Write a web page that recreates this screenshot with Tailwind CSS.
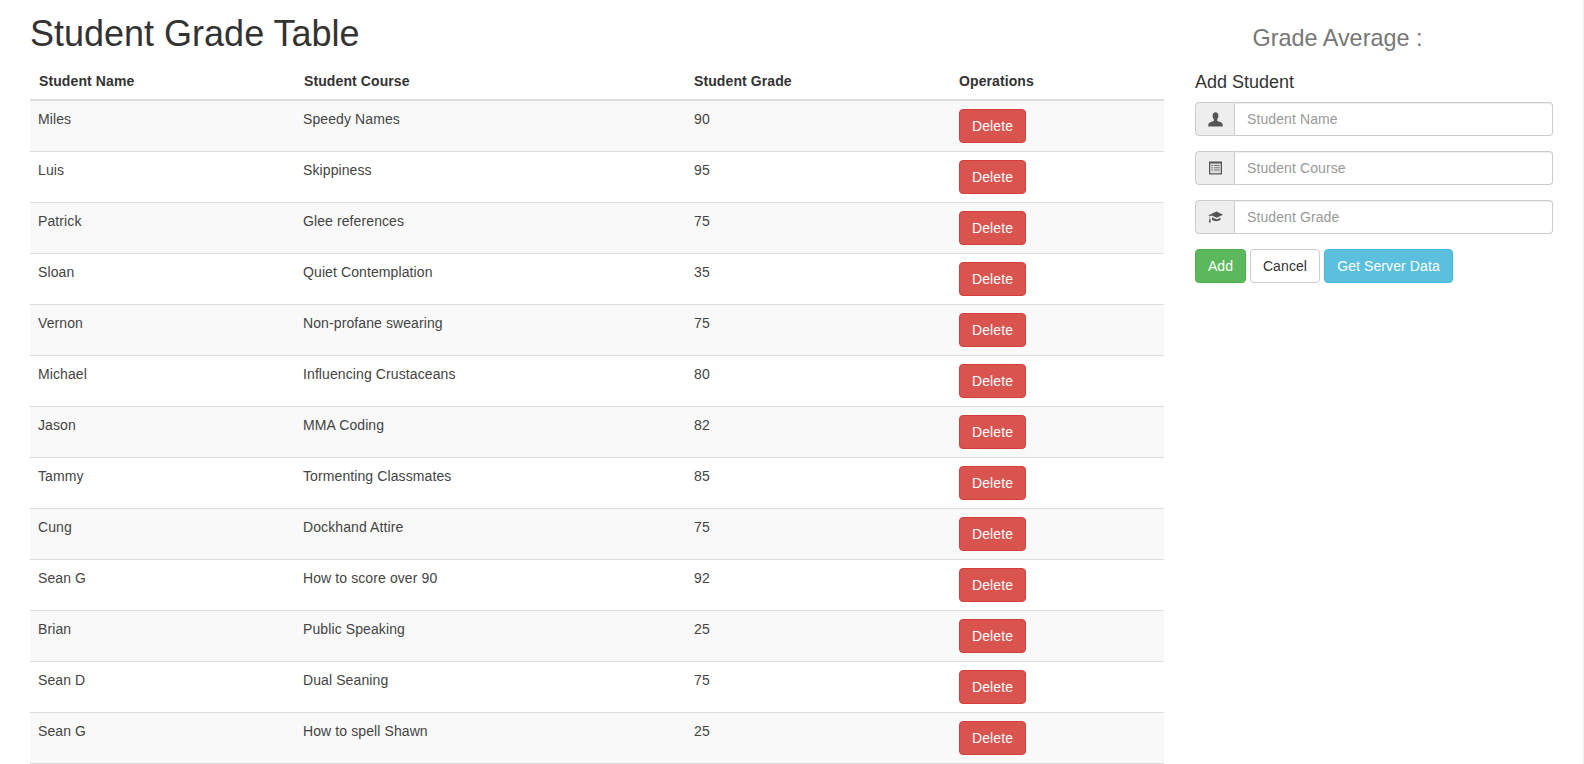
<!DOCTYPE html>
<html lang="en">

<head>
    <meta charset="UTF-8">
    <meta name="viewport" content="width=device-width, initial-scale=1.0">
    <title>Student Grade Table</title>
    <script src="https://cdn.jsdelivr.net/npm/@tailwindcss/browser@4"></script>
</head>

<body class="bg-white text-[#333] text-sm leading-5 tracking-[0.1px] font-['Liberation_Sans',Arial,sans-serif] overflow-hidden">
    <div class="flex items-start pl-[30px] h-[764px] border-r border-[#eee]">
        <!-- table side -->
        <div class="w-[1134px] shrink-0">
            <h1 class="text-[36px] leading-[39.6px] tracking-normal mt-[14px] mb-[9px]">Student Grade Table</h1>
            <table class="w-full table-fixed border-collapse">
                <thead>
                    <tr class="border-b-2 border-[#ddd] text-left">
                        <th class="w-[265px] p-2 pl-[9px] font-bold">Student Name</th>
                        <th class="w-[390px] p-2 pl-[9px] font-bold">Student Course</th>
                        <th class="w-[266px] p-2 pl-[9px] font-bold">Student Grade</th>
                        <th class="p-2 font-bold">Operations</th>
                    </tr>
                </thead>
                <tbody class="text-[#444]">
                    <tr class="border-b border-[#ddd] bg-[#f9f9f9]">
                        <td class="p-2 align-top">Miles</td><td class="p-2 align-top">Speedy Names</td><td class="p-2 pl-[9px] align-top">90</td>
                        <td class="p-2 align-top"><button class="h-[34px] w-[67px] bg-[#d9534f] border border-[#d43f3a] rounded text-white">Delete</button></td>
                    </tr>
                    <tr class="border-b border-[#ddd]">
                        <td class="p-2 align-top">Luis</td><td class="p-2 align-top">Skippiness</td><td class="p-2 pl-[9px] align-top">95</td>
                        <td class="p-2 align-top"><button class="h-[34px] w-[67px] bg-[#d9534f] border border-[#d43f3a] rounded text-white">Delete</button></td>
                    </tr>
                    <tr class="border-b border-[#ddd] bg-[#f9f9f9]">
                        <td class="p-2 align-top">Patrick</td><td class="p-2 align-top">Glee references</td><td class="p-2 pl-[9px] align-top">75</td>
                        <td class="p-2 align-top"><button class="h-[34px] w-[67px] bg-[#d9534f] border border-[#d43f3a] rounded text-white">Delete</button></td>
                    </tr>
                    <tr class="border-b border-[#ddd]">
                        <td class="p-2 align-top">Sloan</td><td class="p-2 align-top">Quiet Contemplation</td><td class="p-2 pl-[9px] align-top">35</td>
                        <td class="p-2 align-top"><button class="h-[34px] w-[67px] bg-[#d9534f] border border-[#d43f3a] rounded text-white">Delete</button></td>
                    </tr>
                    <tr class="border-b border-[#ddd] bg-[#f9f9f9]">
                        <td class="p-2 align-top">Vernon</td><td class="p-2 align-top">Non-profane swearing</td><td class="p-2 pl-[9px] align-top">75</td>
                        <td class="p-2 align-top"><button class="h-[34px] w-[67px] bg-[#d9534f] border border-[#d43f3a] rounded text-white">Delete</button></td>
                    </tr>
                    <tr class="border-b border-[#ddd]">
                        <td class="p-2 align-top">Michael</td><td class="p-2 align-top">Influencing Crustaceans</td><td class="p-2 pl-[9px] align-top">80</td>
                        <td class="p-2 align-top"><button class="h-[34px] w-[67px] bg-[#d9534f] border border-[#d43f3a] rounded text-white">Delete</button></td>
                    </tr>
                    <tr class="border-b border-[#ddd] bg-[#f9f9f9]">
                        <td class="p-2 align-top">Jason</td><td class="p-2 align-top">MMA Coding</td><td class="p-2 pl-[9px] align-top">82</td>
                        <td class="p-2 align-top"><button class="h-[34px] w-[67px] bg-[#d9534f] border border-[#d43f3a] rounded text-white">Delete</button></td>
                    </tr>
                    <tr class="border-b border-[#ddd]">
                        <td class="p-2 align-top">Tammy</td><td class="p-2 align-top">Tormenting Classmates</td><td class="p-2 pl-[9px] align-top">85</td>
                        <td class="p-2 align-top"><button class="h-[34px] w-[67px] bg-[#d9534f] border border-[#d43f3a] rounded text-white">Delete</button></td>
                    </tr>
                    <tr class="border-b border-[#ddd] bg-[#f9f9f9]">
                        <td class="p-2 align-top">Cung</td><td class="p-2 align-top">Dockhand Attire</td><td class="p-2 pl-[9px] align-top">75</td>
                        <td class="p-2 align-top"><button class="h-[34px] w-[67px] bg-[#d9534f] border border-[#d43f3a] rounded text-white">Delete</button></td>
                    </tr>
                    <tr class="border-b border-[#ddd]">
                        <td class="p-2 align-top">Sean G</td><td class="p-2 align-top">How to score over 90</td><td class="p-2 pl-[9px] align-top">92</td>
                        <td class="p-2 align-top"><button class="h-[34px] w-[67px] bg-[#d9534f] border border-[#d43f3a] rounded text-white">Delete</button></td>
                    </tr>
                    <tr class="border-b border-[#ddd] bg-[#f9f9f9]">
                        <td class="p-2 align-top">Brian</td><td class="p-2 align-top">Public Speaking</td><td class="p-2 pl-[9px] align-top">25</td>
                        <td class="p-2 align-top"><button class="h-[34px] w-[67px] bg-[#d9534f] border border-[#d43f3a] rounded text-white">Delete</button></td>
                    </tr>
                    <tr class="border-b border-[#ddd]">
                        <td class="p-2 align-top">Sean D</td><td class="p-2 align-top">Dual Seaning</td><td class="p-2 pl-[9px] align-top">75</td>
                        <td class="p-2 align-top"><button class="h-[34px] w-[67px] bg-[#d9534f] border border-[#d43f3a] rounded text-white">Delete</button></td>
                    </tr>
                    <tr class="border-b border-[#ddd] bg-[#f9f9f9]">
                        <td class="p-2 align-top">Sean G</td><td class="p-2 align-top">How to spell Shawn</td><td class="p-2 pl-[9px] align-top">25</td>
                        <td class="p-2 align-top"><button class="h-[34px] w-[67px] bg-[#d9534f] border border-[#d43f3a] rounded text-white">Delete</button></td>
                    </tr>
                </tbody>
            </table>
        </div>

        <!-- add student form -->
        <div class="w-[358px] ml-[31px] shrink-0">
            <h3 class="text-[23.4px] leading-[26.4px] tracking-normal text-[#777] text-center mt-[25px] pr-[73px]">Grade Average :</h3>
            <h4 class="text-lg leading-5 tracking-normal mt-[21px] mb-[10px]">Add Student</h4>

            <div class="flex h-[34px] mb-[15px]">
                <span class="w-[40px] shrink-0 flex items-center justify-center bg-[#eee] border border-[#ccc] rounded-l">
                    <svg class="w-[15px] h-[15px] text-[#555]" viewBox="0 0 14 14" fill="currentColor"><path d="M7 .3c-1.700 0-2.700 1.400-2.700 3.300 0 1.300.4 2.500 1.100 3.200v1.500C3.600 9 1.200 9.500.6 10.800c-.3.600-.4 1.600-.4 2.700h13.600c0-1.100-.1-2.100-.4-2.700-.6-1.300-3-1.800-4.800-2.500V6.800c.7-.7 1.100-1.900 1.100-3.200C9.700 1.700 8.700.3 7 .3z"/></svg>
                </span>
                <input type="text" placeholder="Student Name" class="flex-1 min-w-0 px-3 border border-l-0 border-[#ccc] rounded-r shadow-[inset_0_1px_1px_rgba(0,0,0,0.075)] placeholder:text-[#999]">
            </div>

            <div class="flex h-[34px] mb-[15px]">
                <span class="w-[40px] shrink-0 flex items-center justify-center bg-[#eee] border border-[#ccc] rounded-l">
                    <svg class="w-[13px] h-[14px] text-[#555]" viewBox="0 0 13 14"><rect x="0" y="0.500" width="13" height="13" fill="currentColor"/><rect x="1.200" y="2.500" width="10.600" height="9.800" fill="#ddd"/><path d="M2.300 4h1.700v1H2.300zM5 4h5.700v1H5zM2.300 6.200h1.700v1H2.300zM5 6.200h5.700v1H5zM2.300 8.400h1.700v1H2.300zM5 8.400h5.700v1H5z" fill="#777"/></svg>
                </span>
                <input type="text" placeholder="Student Course" class="flex-1 min-w-0 px-3 border border-l-0 border-[#ccc] rounded-r shadow-[inset_0_1px_1px_rgba(0,0,0,0.075)] placeholder:text-[#999]">
            </div>

            <div class="flex h-[34px] mb-[15px]">
                <span class="w-[40px] shrink-0 flex items-center justify-center bg-[#eee] border border-[#ccc] rounded-l">
                    <svg class="w-[15px] h-[14px] text-[#555]" viewBox="0 0 15 14" fill="currentColor"><path d="M8.500 1.500 15 4.700l-6.200 3-5-2.300-1.800.9v2.100c.3.200.4.400.4.700l.4 3.400H.9l.5-3.400c0-.3.100-.5.300-.7V5.900L.5 5.300z"/><path d="M4 7.300l4.800 2.200 3.700-1.800v2.100c-1.100.9-2.500 1.400-4.200 1.400-1.600 0-3.200-.5-4.300-1.400z"/></svg>
                </span>
                <input type="text" placeholder="Student Grade" class="flex-1 min-w-0 px-3 border border-l-0 border-[#ccc] rounded-r shadow-[inset_0_1px_1px_rgba(0,0,0,0.075)] placeholder:text-[#999]">
            </div>

            <div class="flex gap-1">
                <button class="h-[34px] w-[51px] bg-[#5cb85c] border border-[#4cae4c] rounded text-white">Add</button>
                <button class="h-[34px] w-[70px] bg-white border border-[#ccc] rounded text-[#333]">Cancel</button>
                <button class="h-[34px] w-[129px] bg-[#5bc0de] border border-[#46b8da] rounded text-white">Get Server Data</button>
            </div>
        </div>
    </div>
</body>

</html>
